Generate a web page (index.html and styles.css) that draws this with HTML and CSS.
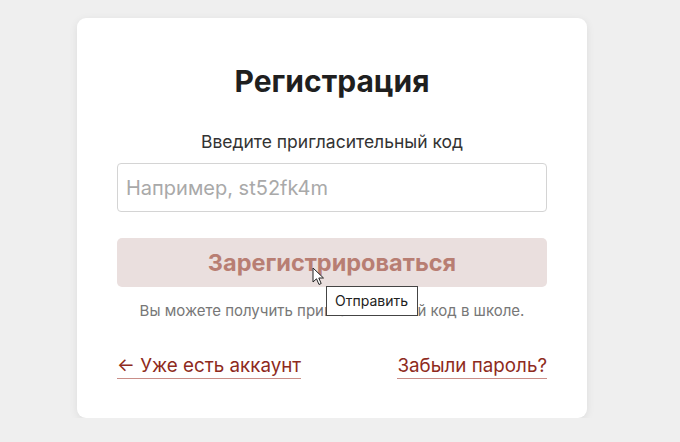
FILE: index.html
```html
<!doctype html>
<html lang="ru">
<head>
  <meta charset="UTF-8" />
  <meta name="viewport" content="width=device-width, initial-scale=1" />
  <title>Регистрация</title>
  <link rel="stylesheet" href="styles.css">
</head>
<body>
  <div id="page">
    <div class="card">
      <h1 class="title">Регистрация</h1>
      <form class="form">
        <label class="label" for="invite">Введите пригласительный код</label>
        <input id="invite" class="input" type="text" placeholder="Например, st52fk4m">
        <div class="submit-wrap">
          <button class="submit" type="submit" disabled>Зарегистрироваться</button>
          <svg class="cursor" width="14" height="20" viewBox="0 0 14 20">
            <path d="M1 1 L1 15 L4.5 11.8 L7 17.5 L9.2 16.5 L6.8 11 L11.5 11 Z" fill="#fff" stroke="#222" stroke-width="1" stroke-linejoin="round"/>
          </svg>
          <span class="tooltip">Отправить</span>
        </div>
        <p class="hint">Вы можете получить пригласительный код в школе.</p>
      </form>
      <div class="links">
        <a href="#" class="link">← Уже есть аккаунт</a>
        <a href="#" class="link">Забыли пароль?</a>
      </div>
    </div>
  </div>
</body>
</html>
```

FILE: styles.css
```css
body {
  margin: 0;
  background: #efefef;
  font-family: Inter, "Noto Sans", sans-serif;
  color: #222;
}
#page {
  display: flex;
  justify-content: center;
  padding: 18px 16px 0 0;
}
.card {
  width: 430px;
  background: #fff;
  border-radius: 9px;
  padding: 45px 40px 39px;
  box-shadow: 0 2px 8px rgba(0, 0, 0, 0.08);
}
.title {
  margin: 0;
  text-align: center;
  font-size: 30px;
  font-weight: 700;
  line-height: 36px;
  color: #1f1f1f;
}
.form {
  display: flex;
  flex-direction: column;
  margin-top: 33px;
}
.label {
  text-align: center;
  font-size: 17.5px;
  line-height: 20px;
  color: #333;
}
.input {
  margin-top: 11px;
  height: 49px;
  box-sizing: border-box;
  border: 1px solid #d4d4d4;
  border-radius: 4px;
  padding: 0 8px;
  font-family: inherit;
  font-size: 20px;
  color: #222;
}
.input::placeholder {
  color: #a9a9a9;
}
.submit-wrap {
  position: relative;
  margin-top: 26px;
}
.submit {
  width: 100%;
  height: 49px;
  border: none;
  border-radius: 5px;
  background: #eadfde;
  color: #b87e73;
  font-family: inherit;
  font-size: 23.5px;
  font-weight: 700;
}
.cursor {
  position: absolute;
  left: 195px;
  top: 29px;
}
.tooltip {
  position: absolute;
  left: 209px;
  top: 48px;
  padding: 5px 9px 5px 8px;
  border: 1px solid #444;
  background: #fff;
  font-size: 14px;
  line-height: 18px;
  color: #222;
  white-space: nowrap;
}
.hint {
  margin: 15px 0 0;
  text-align: center;
  font-size: 15px;
  line-height: 18px;
  color: #777;
}
.links {
  display: flex;
  justify-content: space-between;
  margin-top: 35px;
}
.link {
  font-size: 18.8px;
  line-height: 22px;
  color: #8e2a20;
  text-decoration: none;
  border-bottom: 1px solid #c98e88;
  padding-bottom: 1px;
}
```
